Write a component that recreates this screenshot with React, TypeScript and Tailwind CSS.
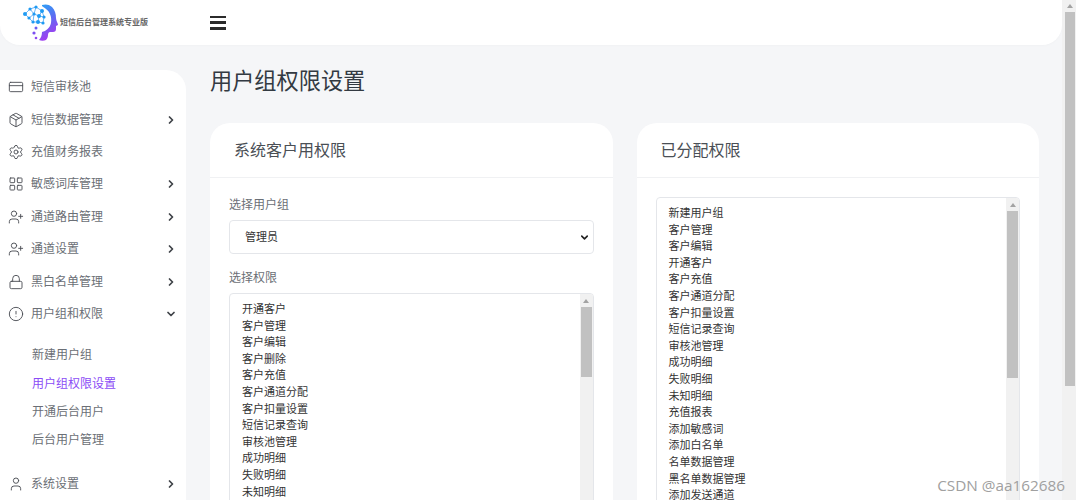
import React from "react";
import { ChevronDown, ChevronRight, CircleAlert, CreditCard, LayoutGrid, Lock, Package, Settings, User, UserPlus } from "lucide-react";

const font = "font-['Liberation_Sans','Noto_Sans_CJK_SC',sans-serif]";

const menuTop = [
  { label: "短信审核池", icon: CreditCard, arrow: false },
  { label: "短信数据管理", icon: Package, arrow: true },
  { label: "充值财务报表", icon: Settings, arrow: false },
  { label: "敏感词库管理", icon: LayoutGrid, arrow: true },
  { label: "通道路由管理", icon: UserPlus, arrow: true },
  { label: "通道设置", icon: UserPlus, arrow: true },
  { label: "黑白名单管理", icon: Lock, arrow: true },
];

const subMenu = ["新建用户组", "用户组权限设置", "开通后台用户", "后台用户管理"];

const leftList = ["开通客户", "客户管理", "客户编辑", "客户删除", "客户充值", "客户通道分配", "客户扣量设置", "短信记录查询", "审核池管理", "成功明细", "失败明细", "未知明细"];

const rightList = ["新建用户组", "客户管理", "客户编辑", "开通客户", "客户充值", "客户通道分配", "客户扣量设置", "短信记录查询", "审核池管理", "成功明细", "失败明细", "未知明细", "充值报表", "添加敏感词", "添加白名单", "名单数据管理", "黑名单数据管理", "添加发送通道"];

function Logo() {
  const nodes = [[2, 10], [7, 5], [13, 3], [19, 7], [6, 14], [11, 10], [16, 12], [21, 13], [10, 18], [15, 18], [20, 19]];
  return (
    <svg width="36" height="37" viewBox="0 0 36 37" className="shrink-0">
      <defs>
        <linearGradient id="head" x1="0" y1="0" x2="0.3" y2="1">
          <stop offset="0" stopColor="#2aa5f5" />
          <stop offset="0.5" stopColor="#5b6cf2" />
          <stop offset="1" stopColor="#a33cf0" />
        </linearGradient>
      </defs>
      <path d="M19 1c3-1 7-1 10 2 3 3 4 7 4 11 0 3 2 5 2 7l-2 1v3c0 2-1 3-3 3h-3c-1 0-2 1-2 3 0 2-1 4-2 5-2 1-5 1-7 0 2-2 3-5 3-8 4-1 8-4 9-9 1-6-1-11-5-14-1-1-3-2-4-3z" fill="url(#head)" />
      <g stroke="#4aa3f5" strokeWidth="0.8" fill="none">
        <path d="M2 10 7 5 13 3 19 7 21 13 20 19 15 18 10 18 6 14 2 10M7 5 11 10 16 12 19 7M6 14 11 10 10 18M16 12 15 18M16 12 21 13M13 3 11 10" />
      </g>
      {nodes.map(([x, y], i) => (
        <circle key={i} cx={x} cy={y} r={i % 3 === 0 ? 2 : 1.6} fill="#1f9bf3" />
      ))}
      <circle cx="13" cy="24" r="1.5" fill="#6a5cf0" />
      <circle cx="11" cy="29" r="1.6" fill="#7c4ff0" />
      <circle cx="13" cy="34" r="1.3" fill="#8f47f0" />
    </svg>
  );
}

function NavRow({ label, icon: Icon, arrow, open }: { label: string; icon: React.ComponentType<any>; arrow?: boolean; open?: boolean }) {
  return (
    <div className="flex h-[32.4px] items-center pl-2 pr-[9px] text-[12px] text-[#6b6f76]">
      <Icon size={16} strokeWidth={1.4} className="shrink-0 text-[#4b4f55]" />
      <span className="ml-[7px] flex-1">{label}</span>
      {open ? (
        <ChevronDown size={12} strokeWidth={3.5} className="text-[#3f4348]" />
      ) : arrow ? (
        <ChevronRight size={12} strokeWidth={3.5} className="text-[#3f4348]" />
      ) : null}
    </div>
  );
}

function Arrow() {
  return <div className="h-0 w-0 border-x-[3.5px] border-b-[4px] border-x-transparent border-b-[#a3a3a3]" />;
}

function ListBox({ items, thumb }: { items: string[]; thumb: string }) {
  return (
    <div className="flex h-[400px] overflow-hidden rounded-[4px] border border-[#e4e6ea] bg-white">
      <div className="flex-1 pl-[12px] pt-[7px] text-[11px] leading-[16.6px] text-[#333333]">
        {items.map((item, i) => (
          <div key={i}>{item}</div>
        ))}
      </div>
      <div className="flex w-[13px] flex-col items-center bg-[#f1f1f1]">
        <div className="flex h-[13px] items-center justify-center">
          <Arrow />
        </div>
        <div className={`w-[11px] bg-[#c1c1c1] ${thumb}`} />
      </div>
    </div>
  );
}

export default function App() {
  return (
    <div className={`relative flex h-[500px] overflow-hidden bg-[#f5f6f8] ${font}`}>
      <div className="min-w-0 flex-1">
        <header className="flex h-[45px] items-center rounded-b-[20px] bg-white pl-[23px] shadow-[0_1px_3px_rgba(0,0,0,0.02)]">
          <Logo />
          <span className="ml-[1px] w-[90px] whitespace-nowrap text-[8px] font-bold text-[#666666]">短信后台管理系统专业版</span>
          <div className="ml-[60px] flex h-[14px] w-[16px] flex-col justify-between">
            <div className="h-[2.5px] bg-[#2b2b2b]" />
            <div className="h-[2.5px] bg-[#2b2b2b]" />
            <div className="h-[2.5px] bg-[#2b2b2b]" />
          </div>
        </header>

        <div className="mt-[25px] flex">
          <aside className="h-[430px] w-[186px] shrink-0 rounded-tr-[20px] bg-white pt-px">
            {menuTop.map((m) => (
              <NavRow key={m.label} label={m.label} icon={m.icon} arrow={m.arrow} />
            ))}
            <NavRow label="用户组和权限" icon={CircleAlert} open />
            <div className="mb-[13px] mt-[11px] pl-[32px] text-[12px]">
              {subMenu.map((s, i) => (
                <div key={s} className={`flex h-[28.4px] items-center ${i === 1 ? "text-[#8b4cf6]" : "text-[#6b6f76]"}`}>
                  {s}
                </div>
              ))}
            </div>
            <NavRow label="系统设置" icon={User} arrow />
          </aside>

          <main className="min-w-0 flex-1 pl-[24px] pr-[23px]">
            <h1 className="flex h-[24px] items-center text-[22.2px] font-normal text-[#333a42]">用户组权限设置</h1>
            <div className="mt-[29px] grid grid-cols-2 gap-[24px]">
              <section className="h-[420px] overflow-hidden rounded-t-[20px] bg-white">
                <div className="flex h-[55px] items-center border-b border-[#f0f1f3] pl-[24px] pt-[1px] text-[16px] text-[#4a4f55]">系统客户用权限</div>
                <div className="px-[19px] pt-[19px]">
                  <div className="text-[12px] leading-[16px] text-[#6b6f76]">选择用户组</div>
                  <div className="mt-[7px] flex h-[34px] items-center justify-between rounded-[4px] border border-[#e4e6ea] pl-[15px] pr-[3px] text-[11px] text-[#333333]">
                    <span>管理员</span>
                    <ChevronDown size={11} strokeWidth={3.5} className="text-[#222222]" />
                  </div>
                  <div className="mt-[16px] text-[12px] leading-[16px] text-[#6b6f76]">选择权限</div>
                  <div className="mt-[7px]">
                    <ListBox items={leftList} thumb="h-[70px]" />
                  </div>
                </div>
              </section>

              <section className="h-[420px] overflow-hidden rounded-t-[20px] bg-white">
                <div className="flex h-[55px] items-center border-b border-[#f0f1f3] pb-[1px] pl-[24px] pt-[2px] text-[16px] text-[#4a4f55]">已分配权限</div>
                <div className="px-[19px] pt-[19px]">
                  <ListBox items={rightList} thumb="h-[167px]" />
                </div>
              </section>
            </div>
          </main>
        </div>
      </div>

      <div className="flex w-[14px] shrink-0 flex-col items-center bg-[#f1f1f1] pl-px">
        <div className="flex h-[12px] items-center justify-center">
          <Arrow />
        </div>
        <div className="h-[374px] w-[10px] bg-[#c1c1c1]" />
      </div>

      <div className="absolute bottom-[5px] right-[11px] font-['Open_Sans',sans-serif] text-[15.3px] leading-[20px] text-[#a0a0a0]">CSDN @aa162686</div>
    </div>
  );
}
